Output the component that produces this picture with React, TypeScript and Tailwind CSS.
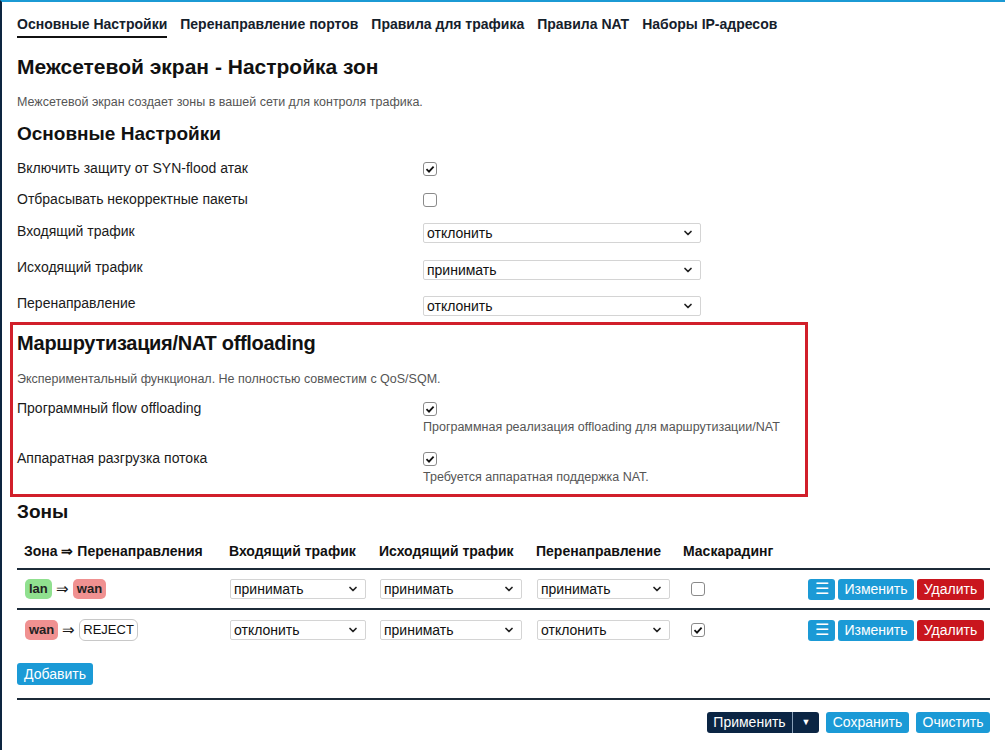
import React from "react";
import { ChevronDown } from "lucide-react";

const Check = ({ on }: { on?: boolean }) => (
  <span className="flex h-[14px] w-[14px] items-center justify-center rounded-[3px] border border-[#8a8a8a] bg-white">
    {on && (
      <svg width="10" height="10" viewBox="0 0 10 10">
        <path d="M1.5 5.2 L4 7.6 L8.6 2.6" fill="none" stroke="#111" strokeWidth="1.8" />
      </svg>
    )}
  </span>
);

const Select = ({ value, w }: { value: string; w: string }) => (
  <div
    className={
      "flex h-[20px] items-center justify-between rounded-[2px] border border-[#d4d4d4] bg-white pl-[3px] pr-[6px] text-[14px] text-[#111] " +
      w
    }
  >
    <span>{value}</span>
    <ChevronDown size={12} strokeWidth={3.5} className="text-[#222]" />
  </div>
);

const Btn = ({ children, cls }: { children: React.ReactNode; cls: string }) => (
  <span className={"flex h-[21px] items-center justify-center rounded-[3px] text-[14px] text-white " + cls}>
    {children}
  </span>
);

const tabs = ["Основные Настройки", "Перенаправление портов", "Правила для трафика", "Правила NAT", "Наборы IP-адресов"];

const App = () => {
  return (
    <div
      className="min-h-[750px] w-[1005px] border-t-2 border-l-2 border-t-[#1b9ad4] border-l-[#0d2540] bg-white pl-[15px] pr-[15px] text-[#1a1a1a]"
      style={{ fontFamily: '"Liberation Sans", Arial, sans-serif' }}
    >
      {/* tabs */}
      <div className="flex gap-[13px] pt-[14px] text-[14px] font-bold leading-[16px] text-[#15202b]">
        {tabs.map((t, i) => (
          <span key={t} className={i === 0 ? "border-b-2 border-[#111] pb-[4px]" : "pb-[6px]"}>
            {t}
          </span>
        ))}
      </div>

      <h2 className="mt-[17px] text-[21px] font-bold leading-[24px] text-[#111]">Межсетевой экран - Настройка зон</h2>
      <p className="mt-[15px] text-[12.5px] leading-[16px] text-[#555]">
        Межсетевой экран создает зоны в вашей сети для контроля трафика.
      </p>

      <h3 className="mt-[12px] text-[19px] font-bold leading-[24px] text-[#111]">Основные Настройки</h3>

      <div className="mt-[12px] text-[14px] leading-[20px]">
        <div className="flex h-[31px]">
          <span className="w-[406px]">Включить защиту от SYN-flood атак</span>
          <div className="pt-[4px]">
            <Check on />
          </div>
        </div>
        <div className="flex h-[32px]">
          <span className="w-[406px]">Отбрасывать некорректные пакеты</span>
          <div className="pt-[4px]">
            <Check />
          </div>
        </div>
        <div className="flex h-[36px]">
          <span className="w-[406px]">Входящий трафик</span>
          <div className="pt-[2px]">
            <Select value="отклонить" w="w-[278px]" />
          </div>
        </div>
        <div className="flex h-[36px]">
          <span className="w-[406px]">Исходящий трафик</span>
          <div className="pt-[3px]">
            <Select value="принимать" w="w-[278px]" />
          </div>
        </div>
        <div className="flex h-[29px]">
          <span className="w-[406px]">Перенаправление</span>
          <div className="pt-[3px]">
            <Select value="отклонить" w="w-[278px]" />
          </div>
        </div>
      </div>

      {/* offloading */}
      <div className="ml-[-7px] h-[175px] w-[798px] border-[3px] border-[#d11f2a] pl-[4px] pt-[6px]">
        <h3 className="text-[20px] font-bold leading-[24px] tracking-[-0.3px] text-[#111]">Маршрутизация/NAT offloading</h3>
        <p className="mt-[16px] text-[12.5px] leading-[16px] text-[#555]">
          Экспериментальный функционал. Не полностью совместим с QoS/SQM.
        </p>
        <div className="mt-[11px] flex h-[50px] text-[14px] leading-[20px]">
          <span className="w-[406px]">Программный flow offloading</span>
          <div className="pt-[4px]">
            <Check on />
            <p className="mt-[3px] text-[12.5px] leading-[16px] text-[#555]">
              Программная реализация offloading для маршрутизации/NAT
            </p>
          </div>
        </div>
        <div className="flex text-[14px] leading-[20px]">
          <span className="w-[406px]">Аппаратная разгрузка потока</span>
          <div className="pt-[4px]">
            <Check on />
            <p className="mt-[3px] text-[12.5px] leading-[16px] text-[#555]">Требуется аппаратная поддержка NAT.</p>
          </div>
        </div>
      </div>

      <h3 className="mt-[3px] text-[19px] font-bold leading-[24px] text-[#111]">Зоны</h3>

      {/* zones table */}
      <div className="mt-[11px] text-[14px]">
        <div className="grid h-[35px] grid-cols-[205px_150px_157px_147px_1fr] items-center border-b-2 border-[#1c2a38] px-[7px] font-bold text-[#111]">
          <span>Зона ⇒ Перенаправления</span>
          <span>Входящий трафик</span>
          <span>Исходящий трафик</span>
          <span>Перенаправление</span>
          <span>Маскарадинг</span>
        </div>
        {[
          { src: "lan", dst: "wan", inp: "принимать", out: "принимать", fwd: "принимать", masq: false },
          { src: "wan", dst: "REJECT", inp: "отклонить", out: "принимать", fwd: "отклонить", masq: true },
        ].map((r, i) => (
          <div
            key={i}
            className={
              "grid h-[40px] grid-cols-[205px_150px_157px_147px_1fr] items-center pl-[8px] pr-[6px] " +
              (i === 0 ? "border-b-2 border-[#1c2a38]" : "")
            }
          >
            <div className="flex items-center gap-[4px] text-[13px]">
              <span
                className={
                  "flex h-[20px] items-center rounded-[5px] px-[4px] font-bold text-[#222] " +
                  (r.src === "lan" ? "bg-[#90e08f]" : "bg-[#f09191]")
                }
              >
                {r.src}
              </span>
              <span className="text-[15px]">⇒</span>
              <span
                className={
                  r.dst === "wan"
                    ? "flex h-[20px] items-center rounded-[5px] bg-[#f09191] px-[4px] font-bold text-[#222]"
                    : "flex h-[22px] items-center rounded-[6px] border border-[#c8c8c8] bg-white px-[3px] text-[#111]"
                }
              >
                {r.dst}
              </span>
            </div>
            <Select value={r.inp} w="w-[136px]" />
            <Select value={r.out} w="w-[142px]" />
            <Select value={r.fwd} w="w-[133px]" />
            <div className="flex items-center justify-between">
              <div className="pl-[7px]">
                <Check on={r.masq} />
              </div>
              <div className="flex gap-[3px]">
                <Btn cls="w-[27px] bg-[#1b9ad6] text-[16px]">☰</Btn>
                <Btn cls="w-[76px] bg-[#1b9ad6]">Изменить</Btn>
                <Btn cls="w-[67px] bg-[#c9161e]">Удалить</Btn>
              </div>
            </div>
          </div>
        ))}
      </div>

      <div className="mt-[13px] flex">
        <Btn cls="h-[22px] w-[76px] bg-[#1b9ad6]">Добавить</Btn>
      </div>

      <div className="mt-[13px] border-t-2 border-[#1c2a38]" />

      <div className="mt-[12px] flex justify-end gap-[7px]">
        <div className="flex h-[21px] overflow-hidden rounded-[3px] bg-[#0b2544] text-[14px] text-white">
          <span className="flex w-[86px] items-center justify-center border-r border-[#8aa0b8]">Применить</span>
          <span className="flex w-[26px] items-center justify-center text-[9px]">▼</span>
        </div>
        <Btn cls="w-[83px] bg-[#1b9ad6]">Сохранить</Btn>
        <Btn cls="w-[74px] bg-[#1b9ad6]">Очистить</Btn>
      </div>
    </div>
  );
};

export default App;
